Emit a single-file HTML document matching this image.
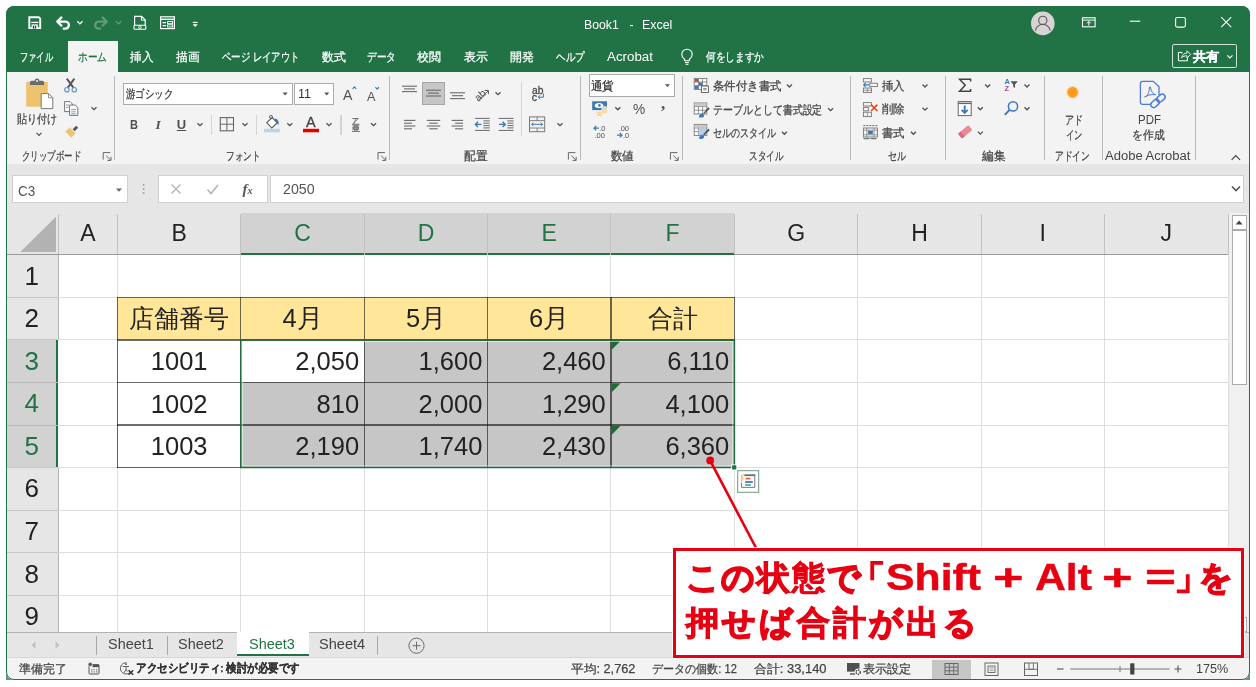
<!DOCTYPE html>
<html lang="ja">
<head>
<meta charset="utf-8">
<title>Book1 - Excel</title>
<style>
*{box-sizing:border-box;margin:0;padding:0}
html,body{width:1256px;height:687px;background:#fff;overflow:hidden}
body{font-family:"Liberation Sans",sans-serif;position:relative;color:#444}
#app{will-change:transform;position:absolute;left:0;top:0;width:1256px;height:687px;clip-path:inset(6px 6px 7.4px 6px round 8px 8px 0 0)}
#frame{position:absolute;left:6px;top:6px;width:1244px;height:673.6px;border:1px solid #217346;border-radius:8px;pointer-events:none}
.abs{position:absolute}
.t{position:absolute;white-space:nowrap;line-height:1;transform-origin:0 50%}
/* big regions */
#green{left:0;top:0;width:1256px;height:71.5px;background:#217346}
#hometab{left:68.4px;top:40.7px;width:49.6px;height:32px;background:#f3f3f3}
#ribbon{left:0;top:71.5px;width:1256px;height:92.3px;background:#f3f3f3}
#fbar{left:0;top:163.8px;width:1256px;height:49px;background:#e6e6e6}
#colhdr{left:0;top:212.8px;width:1256px;height:42px;background:#e6e6e6}
#grid{left:58px;top:254.8px;width:1170.5px;height:378px;background:#fff}
#rowhdr{left:0;top:254.8px;width:58px;height:378px;background:#e6e6e6}
#vscroll{left:1228.5px;top:212.8px;width:22px;height:420px;background:#f0f0f0}
#tabs{left:0;top:632px;width:1256px;height:26px;background:#e6e6e6}
#status{left:6px;top:657.8px;width:1244px;height:21.8px;background:#f3f3f3;border-radius:0 0 8px 8px}
#backdrop{left:0;top:660px;width:1256px;height:27px;background:#6d8c7b}
</style>
</head>
<body>
<div id="app">
<div id="backdrop" class="abs"></div>
<div id="green" class="abs"></div>
<div id="hometab" class="abs"></div>
<div id="ribbon" class="abs"></div>
<div id="fbar" class="abs"></div>
<div id="colhdr" class="abs"></div>
<div id="rowhdr" class="abs"></div>
<div id="grid" class="abs"></div>
<div id="vscroll" class="abs"></div>
<div id="tabs" class="abs"></div>
<div id="status" class="abs"></div>
<span id="t0" class="t" style="font-size:12.3px;color:#fff;top:18.6px;height:12.3px;left:584.3px;transform-origin:0 50%;transform:scaleX(0.9950);">Book1</span>
<span id="t1" class="t" style="font-size:12.3px;color:#fff;top:18.6px;height:12.3px;left:629.6px;transform-origin:0 50%;">-</span>
<span id="t2" class="t" style="font-size:12.3px;color:#fff;top:18.6px;height:12.3px;left:641.7px;transform-origin:0 50%;transform:scaleX(1.0074);">Excel</span>
<div class="abs" style="left:1172.2px;top:44.2px;width:64.8px;height:24.2px;border:1px solid #cfe3d6;border-radius:2px"></div>
<span id="t3" class="t" style="font-size:13px;color:#fff;top:50.1px;height:13px;font-weight:bold;left:1193.3px;transform-origin:0 50%;transform:scaleX(1.0192);-webkit-text-stroke:.25px;">共有</span>
<span id="t4" class="t" style="font-size:12px;color:#fff;top:50.6px;height:12px;left:19.7px;transform-origin:0 50%;transform:scaleX(0.6854);-webkit-text-stroke:.25px;">ファイル</span>
<span id="t5" class="t" style="font-size:12px;color:#217346;top:50.6px;height:12px;left:78.0px;transform-origin:0 50%;transform:scaleX(0.8056);-webkit-text-stroke:.25px;">ホーム</span>
<span id="t6" class="t" style="font-size:12px;color:#fff;top:50.6px;height:12px;left:129.6px;transform-origin:0 50%;transform:scaleX(0.9708);-webkit-text-stroke:.25px;">挿入</span>
<span id="t7" class="t" style="font-size:12px;color:#fff;top:50.6px;height:12px;left:175.8px;transform-origin:0 50%;transform:scaleX(0.9792);-webkit-text-stroke:.25px;">描画</span>
<span id="t8" class="t" style="font-size:12px;color:#fff;top:50.6px;height:12px;left:221.5px;transform-origin:0 50%;transform:scaleX(0.7801);-webkit-text-stroke:.25px;">ページ レイアウト</span>
<span id="t9" class="t" style="font-size:12px;color:#fff;top:50.6px;height:12px;left:321.8px;transform-origin:0 50%;transform:scaleX(0.9958);-webkit-text-stroke:.25px;">数式</span>
<span id="t10" class="t" style="font-size:12px;color:#fff;top:50.6px;height:12px;left:367.0px;transform-origin:0 50%;transform:scaleX(0.8000);-webkit-text-stroke:.25px;">データ</span>
<span id="t11" class="t" style="font-size:12px;color:#fff;top:50.6px;height:12px;left:417.3px;transform-origin:0 50%;transform:scaleX(0.9958);-webkit-text-stroke:.25px;">校閲</span>
<span id="t12" class="t" style="font-size:12px;color:#fff;top:50.6px;height:12px;left:463.9px;transform-origin:0 50%;transform:scaleX(0.9958);-webkit-text-stroke:.25px;">表示</span>
<span id="t13" class="t" style="font-size:12px;color:#fff;top:50.6px;height:12px;left:510.3px;transform-origin:0 50%;transform:scaleX(0.9958);-webkit-text-stroke:.25px;">開発</span>
<span id="t14" class="t" style="font-size:12px;color:#fff;top:50.6px;height:12px;left:556.4px;transform-origin:0 50%;transform:scaleX(0.7944);-webkit-text-stroke:.25px;">ヘルプ</span>
<span id="t15" class="t" style="font-size:12px;color:#fff;top:50.6px;height:12px;left:607.0px;transform-origin:0 50%;transform:scaleX(1.1098);">Acrobat</span>
<span id="t16" class="t" style="font-size:12px;color:#fff;top:50.6px;height:12px;left:706.0px;transform-origin:0 50%;transform:scaleX(0.8083);-webkit-text-stroke:.25px;">何をしますか</span>
<div class="abs" style="left:114.0px;top:76.0px;width:1.2px;height:84.0px;background:#b9b9b9"></div>
<div class="abs" style="left:389.2px;top:76.0px;width:1.2px;height:84.0px;background:#b9b9b9"></div>
<div class="abs" style="left:580.0px;top:76.0px;width:1.2px;height:84.0px;background:#b9b9b9"></div>
<div class="abs" style="left:681.8px;top:76.0px;width:1.2px;height:84.0px;background:#b9b9b9"></div>
<div class="abs" style="left:850.1px;top:76.0px;width:1.2px;height:84.0px;background:#b9b9b9"></div>
<div class="abs" style="left:944.7px;top:76.0px;width:1.2px;height:84.0px;background:#b9b9b9"></div>
<div class="abs" style="left:1044.0px;top:76.0px;width:1.2px;height:84.0px;background:#b9b9b9"></div>
<div class="abs" style="left:1101.6px;top:76.0px;width:1.2px;height:84.0px;background:#b9b9b9"></div>
<div class="abs" style="left:1195.2px;top:76.0px;width:1.2px;height:84.0px;background:#b9b9b9"></div>
<span id="t17" class="t" style="font-size:12px;color:#444;top:149.8px;height:12px;left:22.0px;transform-origin:0 50%;transform:scaleX(0.7024);-webkit-text-stroke:.25px;">クリップボード</span>
<span id="t18" class="t" style="font-size:12px;color:#444;top:149.8px;height:12px;left:225.8px;transform-origin:0 50%;transform:scaleX(0.7167);-webkit-text-stroke:.25px;">フォント</span>
<span id="t19" class="t" style="font-size:12px;color:#444;top:149.8px;height:12px;left:464.0px;transform-origin:0 50%;transform:scaleX(0.9750);-webkit-text-stroke:.25px;">配置</span>
<span id="t20" class="t" style="font-size:12px;color:#444;top:149.8px;height:12px;left:611.0px;transform-origin:0 50%;transform:scaleX(0.9583);-webkit-text-stroke:.25px;">数値</span>
<span id="t21" class="t" style="font-size:12px;color:#444;top:149.8px;height:12px;left:748.7px;transform-origin:0 50%;transform:scaleX(0.7146);-webkit-text-stroke:.25px;">スタイル</span>
<span id="t22" class="t" style="font-size:12px;color:#444;top:149.8px;height:12px;left:888.0px;transform-origin:0 50%;transform:scaleX(0.7500);-webkit-text-stroke:.25px;">セル</span>
<span id="t23" class="t" style="font-size:12px;color:#444;top:149.8px;height:12px;left:982.2px;transform-origin:0 50%;transform:scaleX(0.9708);-webkit-text-stroke:.25px;">編集</span>
<span id="t24" class="t" style="font-size:12px;color:#444;top:149.8px;height:12px;left:1054.6px;transform-origin:0 50%;transform:scaleX(0.7271);-webkit-text-stroke:.25px;">アドイン</span>
<span id="t25" class="t" style="font-size:12px;color:#444;top:149.8px;height:12px;left:1105.4px;transform-origin:0 50%;transform:scaleX(1.0847);">Adobe Acrobat</span>
<span id="t26" class="t" style="font-size:12px;color:#444;top:113.3px;height:12px;left:17.0px;transform-origin:0 50%;transform:scaleX(0.8396);-webkit-text-stroke:.25px;">貼り付け</span>
<div class="abs" style="left:123.0px;top:82.5px;width:169.8px;height:22.6px;background:#fff;border:1px solid #ababab"></div>
<span id="t27" class="t" style="font-size:12px;color:#333;top:88.0px;height:12px;left:125.6px;transform-origin:0 50%;transform:scaleX(0.7833);-webkit-text-stroke:.25px;">游ゴシック</span>
<div class="abs" style="left:294.2px;top:82.5px;width:39.6px;height:22.6px;background:#fff;border:1px solid #ababab"></div>
<span id="t28" class="t" style="font-size:12.5px;color:#333;top:88.0px;height:12.5px;left:297.6px;transform-origin:0 50%;transform:scaleX(1.0012);">11</span>
<span id="t29" class="t" style="font-size:14.5px;color:#505050;top:88.2px;height:14.5px;left:343.2px;transform-origin:0 50%;transform:scaleX(0.9719);">A</span>
<span id="t30" class="t" style="font-size:13px;color:#505050;top:89.5px;height:13px;left:366.6px;transform-origin:0 50%;transform:scaleX(0.9686);">A</span>
<span id="t31" class="t" style="font-size:13px;color:#505050;top:118.1px;height:13px;font-weight:bold;left:129.6px;transform-origin:0 50%;transform:scaleX(0.8519);">B</span>
<span id="t32" class="t" style="font-size:13.5px;color:#505050;top:117.8px;height:13.5px;font-weight:bold;font-family:&quot;Liberation Serif&quot;,serif;left:155.4px;transform-origin:0 50%;"><i>I</i></span>
<span id="t33" class="t" style="font-size:13px;color:#505050;top:117.9px;height:13px;font-weight:bold;left:176.8px;transform-origin:0 50%;"><u>U</u></span>
<div class="abs" style="left:211.3px;top:114.5px;width:1.2px;height:20.0px;background:#d4d4d4"></div>
<div class="abs" style="left:256.2px;top:114.5px;width:1.2px;height:20.0px;background:#d4d4d4"></div>
<span id="t34" class="t" style="font-size:14.4px;color:#444;top:115.2px;height:14.4px;left:306.1px;transform-origin:0 50%;-webkit-text-stroke:.35px #444;">A</span>
<div class="abs" style="left:340.4px;top:114.5px;width:1.2px;height:20.0px;background:#d4d4d4"></div>
<span id="t35" class="t" style="font-size:7px;color:#505050;top:116.8px;height:7px;left:352.2px;transform-origin:0 50%;-webkit-text-stroke:.25px;">ア</span>
<span id="t36" class="t" style="font-size:7.5px;color:#505050;top:124.8px;height:7.5px;left:352.0px;transform-origin:0 50%;-webkit-text-stroke:.25px;">亜</span>
<div class="abs" style="left:422.0px;top:82.0px;width:23.2px;height:23.4px;background:#c6c6c6;border:1px solid #a6a6a6"></div>
<div class="abs" style="left:521.2px;top:82.0px;width:1.2px;height:53.5px;background:#d4d4d4"></div>
<span id="t37" class="t" style="font-size:10.5px;color:#505050;top:84.8px;height:10.5px;left:531.6px;transform-origin:0 50%;transform:scaleX(0.9754);-webkit-text-stroke:.35px #505050;">ab</span>
<span id="t38" class="t" style="font-size:10.5px;color:#505050;top:92.0px;height:10.5px;left:531.8px;transform-origin:0 50%;-webkit-text-stroke:.35px #505050;">c</span>
<div class="abs" style="left:589.0px;top:74.3px;width:85.5px;height:22.6px;background:#fff;border:1px solid #ababab"></div>
<span id="t39" class="t" style="font-size:12px;color:#333;top:79.8px;height:12px;left:591.2px;transform-origin:0 50%;transform:scaleX(0.9583);-webkit-text-stroke:.25px;">通貨</span>
<span id="t40" class="t" style="font-size:15px;color:#505050;top:100.5px;height:15px;left:633.0px;transform-origin:0 50%;transform:scaleX(0.9143);">%</span>
<span id="t41" class="t" style="font-size:17px;color:#505050;top:94.7px;height:17px;font-weight:bold;font-family:&quot;Liberation Serif&quot;,serif;left:661.0px;transform-origin:0 50%;">,</span>
<span id="t42" class="t" style="font-size:7.5px;color:#505050;top:124.7px;height:7.5px;left:599.2px;transform-origin:0 50%;">.0</span>
<span id="t43" class="t" style="font-size:7.5px;color:#505050;top:131.7px;height:7.5px;left:594.4px;transform-origin:0 50%;">.00</span>
<span id="t44" class="t" style="font-size:7.5px;color:#505050;top:124.7px;height:7.5px;left:618.6px;transform-origin:0 50%;">.00</span>
<span id="t45" class="t" style="font-size:7.5px;color:#505050;top:131.7px;height:7.5px;left:623.0px;transform-origin:0 50%;">.0</span>
<span id="t46" class="t" style="font-size:12px;color:#444;top:80.0px;height:12px;left:713.0px;transform-origin:0 50%;transform:scaleX(0.9542);-webkit-text-stroke:.25px;">条件付き書式</span>
<span id="t47" class="t" style="font-size:12px;color:#444;top:103.6px;height:12px;left:713.0px;transform-origin:0 50%;transform:scaleX(0.8288);-webkit-text-stroke:.25px;">テーブルとして書式設定</span>
<span id="t48" class="t" style="font-size:12px;color:#444;top:127.2px;height:12px;left:713.0px;transform-origin:0 50%;transform:scaleX(0.7548);-webkit-text-stroke:.25px;">セルのスタイル</span>
<span id="t49" class="t" style="font-size:12px;color:#444;top:79.7px;height:12px;left:882.2px;transform-origin:0 50%;transform:scaleX(0.9500);-webkit-text-stroke:.25px;">挿入</span>
<span id="t50" class="t" style="font-size:12px;color:#444;top:103.3px;height:12px;left:882.2px;transform-origin:0 50%;transform:scaleX(0.9500);-webkit-text-stroke:.25px;">削除</span>
<span id="t51" class="t" style="font-size:12px;color:#444;top:127.2px;height:12px;left:882.2px;transform-origin:0 50%;transform:scaleX(0.9500);-webkit-text-stroke:.25px;">書式</span>
<span id="t52" class="t" style="font-size:7.5px;color:#3c76b8;top:78.2px;height:7.5px;font-weight:bold;left:1004.4px;transform-origin:0 50%;">A</span>
<span id="t53" class="t" style="font-size:7.5px;color:#9b4f96;top:85.0px;height:7.5px;font-weight:bold;left:1004.6px;transform-origin:0 50%;">Z</span>
<span id="t54" class="t" style="font-size:12px;color:#444;top:114.2px;height:12px;left:1065.0px;transform-origin:0 50%;transform:scaleX(0.7500);-webkit-text-stroke:.25px;">アド</span>
<span id="t55" class="t" style="font-size:12px;color:#444;top:128.6px;height:12px;left:1065.6px;transform-origin:0 50%;transform:scaleX(0.6917);-webkit-text-stroke:.25px;">イン</span>
<span id="t56" class="t" style="font-size:12.3px;color:#444;top:114.0px;height:12.3px;left:1137.6px;transform-origin:0 50%;transform:scaleX(0.9305);">PDF</span>
<span id="t57" class="t" style="font-size:12px;color:#444;top:128.6px;height:12px;left:1132.3px;transform-origin:0 50%;transform:scaleX(0.9000);-webkit-text-stroke:.25px;">を作成</span>
<div class="abs" style="left:11.6px;top:175.4px;width:116.6px;height:28.0px;background:#fff;border:1px solid #d0d0d0"></div>
<span id="t58" class="t" style="font-size:15px;color:#555;top:183.0px;height:15px;left:17.5px;transform-origin:0 50%;transform:scaleX(0.9016);">C3</span>
<div class="abs" style="left:158.4px;top:175.4px;width:109.2px;height:28.0px;background:#fff;border:1px solid #d0d0d0"></div>
<span id="t59" class="t" style="font-size:15px;color:#555;top:182.0px;height:15px;font-weight:bold;font-family:&quot;Liberation Serif&quot;,serif;left:242.5px;transform-origin:0 50%;"><i>f</i><span style="font-size:10px"><i>x</i></span></span>
<div class="abs" style="left:270.2px;top:175.4px;width:974.0px;height:28.0px;background:#fff;border:1px solid #d0d0d0"></div>
<span id="t60" class="t" style="font-size:15px;color:#555;top:181.0px;height:15px;left:282.8px;transform-origin:0 50%;transform:scaleX(0.9468);">2050</span>
<div class="abs" style="left:240.8px;top:212.8px;width:493.6px;height:42.0px;background:#d2d2d2;border-bottom:2px solid #217346"></div>
<span id="t61" class="t" style="font-size:23px;color:#222;top:222.1px;height:23px;left:88.0px;transform-origin:50% 50%;transform:translateX(-50%) scaleX(1.0000);">A</span>
<span id="t62" class="t" style="font-size:23px;color:#222;top:222.1px;height:23px;left:179.2px;transform-origin:50% 50%;transform:translateX(-50%) scaleX(1.0000);">B</span>
<span id="t63" class="t" style="font-size:23px;color:#217346;top:222.1px;height:23px;left:302.6px;transform-origin:50% 50%;transform:translateX(-50%) scaleX(1.0000);">C</span>
<span id="t64" class="t" style="font-size:23px;color:#217346;top:222.1px;height:23px;left:426.0px;transform-origin:50% 50%;transform:translateX(-50%) scaleX(1.0000);">D</span>
<span id="t65" class="t" style="font-size:23px;color:#217346;top:222.1px;height:23px;left:549.2px;transform-origin:50% 50%;transform:translateX(-50%) scaleX(1.0000);">E</span>
<span id="t66" class="t" style="font-size:23px;color:#217346;top:222.1px;height:23px;left:672.6px;transform-origin:50% 50%;transform:translateX(-50%) scaleX(1.0000);">F</span>
<span id="t67" class="t" style="font-size:23px;color:#222;top:222.1px;height:23px;left:796.1px;transform-origin:50% 50%;transform:translateX(-50%) scaleX(1.0000);">G</span>
<span id="t68" class="t" style="font-size:23px;color:#222;top:222.1px;height:23px;left:919.5px;transform-origin:50% 50%;transform:translateX(-50%) scaleX(1.0000);">H</span>
<span id="t69" class="t" style="font-size:23px;color:#222;top:222.1px;height:23px;left:1042.8px;transform-origin:50% 50%;transform:translateX(-50%) scaleX(1.0000);">I</span>
<span id="t70" class="t" style="font-size:23px;color:#222;top:222.1px;height:23px;left:1166.2px;transform-origin:50% 50%;transform:translateX(-50%) scaleX(1.0000);">J</span>
<div class="abs" style="left:57.7px;top:213.8px;width:1.0px;height:41.0px;background:#c2c2c2"></div>
<div class="abs" style="left:117.2px;top:213.8px;width:1.0px;height:41.0px;background:#c2c2c2"></div>
<div class="abs" style="left:240.3px;top:213.8px;width:1.0px;height:41.0px;background:#c2c2c2"></div>
<div class="abs" style="left:363.8px;top:213.8px;width:1.0px;height:41.0px;background:#c2c2c2"></div>
<div class="abs" style="left:487.1px;top:213.8px;width:1.0px;height:41.0px;background:#c2c2c2"></div>
<div class="abs" style="left:610.4px;top:213.8px;width:1.0px;height:41.0px;background:#c2c2c2"></div>
<div class="abs" style="left:733.9px;top:213.8px;width:1.0px;height:41.0px;background:#c2c2c2"></div>
<div class="abs" style="left:857.3px;top:213.8px;width:1.0px;height:41.0px;background:#c2c2c2"></div>
<div class="abs" style="left:980.6px;top:213.8px;width:1.0px;height:41.0px;background:#c2c2c2"></div>
<div class="abs" style="left:1104.0px;top:213.8px;width:1.0px;height:41.0px;background:#c2c2c2"></div>
<div class="abs" style="left:1227.5px;top:213.8px;width:1.0px;height:41.0px;background:#c2c2c2"></div>
<div class="abs" style="left:6.0px;top:253.8px;width:234.8px;height:1.0px;background:#9b9b9b"></div>
<div class="abs" style="left:734.4px;top:253.8px;width:493.6px;height:1.0px;background:#9b9b9b"></div>
<div class="abs" style="left:6.0px;top:339.9px;width:52.2px;height:127.6px;background:#d2d2d2;border-right:2px solid #217346"></div>
<span id="t71" class="t" style="font-size:26px;color:#222;top:262.8px;height:26px;left:31.8px;transform-origin:50% 50%;transform:translateX(-50%) scaleX(1.0000);">1</span>
<span id="t72" class="t" style="font-size:26px;color:#222;top:305.3px;height:26px;left:31.8px;transform-origin:50% 50%;transform:translateX(-50%) scaleX(1.0000);">2</span>
<span id="t73" class="t" style="font-size:26px;color:#217346;top:347.9px;height:26px;left:31.8px;transform-origin:50% 50%;transform:translateX(-50%) scaleX(1.0000);">3</span>
<span id="t74" class="t" style="font-size:26px;color:#217346;top:390.4px;height:26px;left:31.8px;transform-origin:50% 50%;transform:translateX(-50%) scaleX(1.0000);">4</span>
<span id="t75" class="t" style="font-size:26px;color:#217346;top:432.9px;height:26px;left:31.8px;transform-origin:50% 50%;transform:translateX(-50%) scaleX(1.0000);">5</span>
<span id="t76" class="t" style="font-size:26px;color:#222;top:475.4px;height:26px;left:31.8px;transform-origin:50% 50%;transform:translateX(-50%) scaleX(1.0000);">6</span>
<span id="t77" class="t" style="font-size:26px;color:#222;top:518.0px;height:26px;left:31.8px;transform-origin:50% 50%;transform:translateX(-50%) scaleX(1.0000);">7</span>
<span id="t78" class="t" style="font-size:26px;color:#222;top:560.5px;height:26px;left:31.8px;transform-origin:50% 50%;transform:translateX(-50%) scaleX(1.0000);">8</span>
<span id="t79" class="t" style="font-size:26px;color:#222;top:603.0px;height:26px;left:31.8px;transform-origin:50% 50%;transform:translateX(-50%) scaleX(1.0000);">9</span>
<div class="abs" style="left:6.0px;top:296.9px;width:52.2px;height:1.0px;background:#c6c6c6"></div>
<div class="abs" style="left:6.0px;top:339.4px;width:52.2px;height:1.0px;background:#c6c6c6"></div>
<div class="abs" style="left:6.0px;top:382.0px;width:52.2px;height:1.0px;background:#b9b9b9"></div>
<div class="abs" style="left:6.0px;top:424.5px;width:52.2px;height:1.0px;background:#b9b9b9"></div>
<div class="abs" style="left:6.0px;top:467.0px;width:52.2px;height:1.0px;background:#c6c6c6"></div>
<div class="abs" style="left:6.0px;top:509.5px;width:52.2px;height:1.0px;background:#c6c6c6"></div>
<div class="abs" style="left:6.0px;top:552.0px;width:52.2px;height:1.0px;background:#c6c6c6"></div>
<div class="abs" style="left:6.0px;top:594.5px;width:52.2px;height:1.0px;background:#c6c6c6"></div>
<div class="abs" style="left:57.7px;top:254.8px;width:1.0px;height:85.1px;background:#b4b4b4"></div>
<div class="abs" style="left:57.7px;top:467.5px;width:1.0px;height:164.5px;background:#b4b4b4"></div>
<div class="abs" style="left:117.2px;top:254.8px;width:1.0px;height:377.2px;background:#dedede"></div>
<div class="abs" style="left:240.3px;top:254.8px;width:1.0px;height:377.2px;background:#dedede"></div>
<div class="abs" style="left:363.8px;top:254.8px;width:1.0px;height:377.2px;background:#dedede"></div>
<div class="abs" style="left:487.1px;top:254.8px;width:1.0px;height:377.2px;background:#dedede"></div>
<div class="abs" style="left:610.4px;top:254.8px;width:1.0px;height:377.2px;background:#dedede"></div>
<div class="abs" style="left:733.9px;top:254.8px;width:1.0px;height:377.2px;background:#dedede"></div>
<div class="abs" style="left:857.3px;top:254.8px;width:1.0px;height:377.2px;background:#dedede"></div>
<div class="abs" style="left:980.6px;top:254.8px;width:1.0px;height:377.2px;background:#dedede"></div>
<div class="abs" style="left:1104.0px;top:254.8px;width:1.0px;height:377.2px;background:#dedede"></div>
<div class="abs" style="left:1227.5px;top:254.8px;width:1.0px;height:377.2px;background:#dedede"></div>
<div class="abs" style="left:58.2px;top:296.9px;width:1169.8px;height:1.0px;background:#dedede"></div>
<div class="abs" style="left:58.2px;top:339.4px;width:1169.8px;height:1.0px;background:#dedede"></div>
<div class="abs" style="left:58.2px;top:382.0px;width:1169.8px;height:1.0px;background:#dedede"></div>
<div class="abs" style="left:58.2px;top:424.5px;width:1169.8px;height:1.0px;background:#dedede"></div>
<div class="abs" style="left:58.2px;top:467.0px;width:1169.8px;height:1.0px;background:#dedede"></div>
<div class="abs" style="left:58.2px;top:509.5px;width:1169.8px;height:1.0px;background:#dedede"></div>
<div class="abs" style="left:58.2px;top:552.0px;width:1169.8px;height:1.0px;background:#dedede"></div>
<div class="abs" style="left:58.2px;top:594.5px;width:1169.8px;height:1.0px;background:#dedede"></div>
<div class="abs" style="left:117.7px;top:297.4px;width:616.7px;height:42.5px;background:#ffe699"></div>
<div class="abs" style="left:240.8px;top:339.9px;width:493.6px;height:127.6px;background:#c6c6c6"></div>
<div class="abs" style="left:240.8px;top:339.9px;width:123.5px;height:42.6px;background:#fff"></div>
<div class="abs" style="left:117.7px;top:339.9px;width:123.1px;height:127.6px;background:#fff"></div>
<div class="abs" style="left:117.0px;top:296.7px;width:618.1px;height:1.4px;background:rgba(20,20,20,.62)"></div>
<div class="abs" style="left:117.0px;top:339.2px;width:618.1px;height:1.4px;background:rgba(20,20,20,.62)"></div>
<div class="abs" style="left:117.0px;top:381.8px;width:618.1px;height:1.4px;background:rgba(20,20,20,.62)"></div>
<div class="abs" style="left:117.0px;top:424.3px;width:618.1px;height:1.4px;background:rgba(20,20,20,.62)"></div>
<div class="abs" style="left:117.0px;top:466.8px;width:618.1px;height:1.4px;background:rgba(20,20,20,.62)"></div>
<div class="abs" style="left:117.0px;top:296.7px;width:1.4px;height:171.5px;background:rgba(20,20,20,.62)"></div>
<div class="abs" style="left:240.1px;top:296.7px;width:1.4px;height:171.5px;background:rgba(20,20,20,.62)"></div>
<div class="abs" style="left:363.6px;top:296.7px;width:1.4px;height:171.5px;background:rgba(20,20,20,.62)"></div>
<div class="abs" style="left:486.9px;top:296.7px;width:1.4px;height:171.5px;background:rgba(20,20,20,.62)"></div>
<div class="abs" style="left:610.2px;top:296.7px;width:1.4px;height:171.5px;background:rgba(20,20,20,.62)"></div>
<div class="abs" style="left:733.7px;top:296.7px;width:1.4px;height:171.5px;background:rgba(20,20,20,.62)"></div>
<span id="t80" class="t" style="font-size:24.6px;color:#222;top:306.8px;height:24.6px;left:179.2px;transform-origin:50% 50%;transform:translateX(-50%) scaleX(1.0000);">店舗番号</span>
<span id="t81" class="t" style="font-size:25.5px;color:#222;top:306.4px;height:25.5px;left:302.6px;transform-origin:50% 50%;transform:translateX(-50%) scaleX(1.0000);">4月</span>
<span id="t82" class="t" style="font-size:25.5px;color:#222;top:306.4px;height:25.5px;left:426.0px;transform-origin:50% 50%;transform:translateX(-50%) scaleX(1.0000);">5月</span>
<span id="t83" class="t" style="font-size:25.5px;color:#222;top:306.4px;height:25.5px;left:549.2px;transform-origin:50% 50%;transform:translateX(-50%) scaleX(1.0000);">6月</span>
<span id="t84" class="t" style="font-size:24.6px;color:#222;top:306.8px;height:24.6px;left:672.6px;transform-origin:50% 50%;transform:translateX(-50%) scaleX(1.0000);">合計</span>
<span id="t85" class="t" style="font-size:25.5px;color:#222;top:349.1px;height:25.5px;left:179.2px;transform-origin:50% 50%;transform:translateX(-50%) scaleX(1.0000);">1001</span>
<span id="t86" class="t" style="font-size:25.5px;color:#222;top:391.6px;height:25.5px;left:179.2px;transform-origin:50% 50%;transform:translateX(-50%) scaleX(1.0000);">1002</span>
<span id="t87" class="t" style="font-size:25.5px;color:#222;top:434.1px;height:25.5px;left:179.2px;transform-origin:50% 50%;transform:translateX(-50%) scaleX(1.0000);">1003</span>
<span id="t88" class="t" style="font-size:25.5px;color:#222;top:349.1px;height:25.5px;left:359.1px;transform-origin:100% 50%;transform:translateX(-100%) scaleX(1.0000);">2,050</span>
<span id="t89" class="t" style="font-size:25.5px;color:#222;top:349.1px;height:25.5px;left:482.4px;transform-origin:100% 50%;transform:translateX(-100%) scaleX(1.0000);">1,600</span>
<span id="t90" class="t" style="font-size:25.5px;color:#222;top:349.1px;height:25.5px;left:605.7px;transform-origin:100% 50%;transform:translateX(-100%) scaleX(1.0000);">2,460</span>
<span id="t91" class="t" style="font-size:25.5px;color:#222;top:349.1px;height:25.5px;left:729.2px;transform-origin:100% 50%;transform:translateX(-100%) scaleX(1.0000);">6,110</span>
<span id="t92" class="t" style="font-size:25.5px;color:#222;top:391.6px;height:25.5px;left:359.1px;transform-origin:100% 50%;transform:translateX(-100%) scaleX(1.0000);">810</span>
<span id="t93" class="t" style="font-size:25.5px;color:#222;top:391.6px;height:25.5px;left:482.4px;transform-origin:100% 50%;transform:translateX(-100%) scaleX(1.0000);">2,000</span>
<span id="t94" class="t" style="font-size:25.5px;color:#222;top:391.6px;height:25.5px;left:605.7px;transform-origin:100% 50%;transform:translateX(-100%) scaleX(1.0000);">1,290</span>
<span id="t95" class="t" style="font-size:25.5px;color:#222;top:391.6px;height:25.5px;left:729.2px;transform-origin:100% 50%;transform:translateX(-100%) scaleX(1.0000);">4,100</span>
<span id="t96" class="t" style="font-size:25.5px;color:#222;top:434.1px;height:25.5px;left:359.1px;transform-origin:100% 50%;transform:translateX(-100%) scaleX(1.0000);">2,190</span>
<span id="t97" class="t" style="font-size:25.5px;color:#222;top:434.1px;height:25.5px;left:482.4px;transform-origin:100% 50%;transform:translateX(-100%) scaleX(1.0000);">1,740</span>
<span id="t98" class="t" style="font-size:25.5px;color:#222;top:434.1px;height:25.5px;left:605.7px;transform-origin:100% 50%;transform:translateX(-100%) scaleX(1.0000);">2,430</span>
<span id="t99" class="t" style="font-size:25.5px;color:#222;top:434.1px;height:25.5px;left:729.2px;transform-origin:100% 50%;transform:translateX(-100%) scaleX(1.0000);">6,360</span>
<div class="abs" style="left:1231.6px;top:215.0px;width:15.0px;height:15.0px;background:#fff;border:1px solid #ababab"></div>
<div class="abs" style="left:1231.6px;top:229.6px;width:15.0px;height:155.5px;background:#fff;border:1px solid #ababab"></div>
<div class="abs" style="left:6.0px;top:631.6px;width:1244.0px;height:1.0px;background:#b2b2b2"></div>
<div class="abs" style="left:6.0px;top:657.2px;width:1244.0px;height:1.0px;background:#d6d6d6"></div>
<div class="abs" style="left:1231.6px;top:617.0px;width:15.0px;height:15.0px;background:#fff;border:1px solid #ababab"></div>
<div class="abs" style="left:95.8px;top:635.5px;width:1.0px;height:19.0px;background:#a8a8a8"></div>
<div class="abs" style="left:166.9px;top:635.5px;width:1.0px;height:19.0px;background:#a8a8a8"></div>
<div class="abs" style="left:376.8px;top:635.5px;width:1.0px;height:19.0px;background:#a8a8a8"></div>
<div class="abs" style="left:237.4px;top:632.0px;width:71.4px;height:24.3px;background:#fff;border-bottom:2px solid #217346"></div>
<span id="t100" class="t" style="font-size:15.5px;color:#444;top:635.9px;height:15.5px;left:108.0px;transform-origin:0 50%;transform:scaleX(0.9320);">Sheet1</span>
<span id="t101" class="t" style="font-size:15.5px;color:#444;top:635.9px;height:15.5px;left:178.4px;transform-origin:0 50%;transform:scaleX(0.9320);">Sheet2</span>
<span id="t102" class="t" style="font-size:15.5px;color:#217346;top:635.9px;height:15.5px;left:249.0px;transform-origin:0 50%;transform:scaleX(0.9341);">Sheet3</span>
<span id="t103" class="t" style="font-size:15.5px;color:#444;top:635.9px;height:15.5px;left:319.4px;transform-origin:0 50%;transform:scaleX(0.9402);">Sheet4</span>
<span id="t104" class="t" style="font-size:12px;color:#444;top:662.8px;height:12px;left:19.0px;transform-origin:0 50%;transform:scaleX(0.9938);-webkit-text-stroke:.25px;">準備完了</span>
<span id="t105" class="t" style="font-size:11.5px;color:#333;top:663.0px;height:11.5px;font-weight:bold;left:136.3px;transform-origin:0 50%;transform:scaleX(0.8769);-webkit-text-stroke:.25px;">アクセシビリティ: 検討が必要です</span>
<span id="t106" class="t" style="font-size:12px;color:#444;top:663.3px;height:12px;left:571.0px;transform-origin:0 50%;transform:scaleX(1.0609);-webkit-text-stroke:.25px;">平均: 2,762</span>
<span id="t107" class="t" style="font-size:12px;color:#444;top:663.3px;height:12px;left:652.4px;transform-origin:0 50%;transform:scaleX(0.9216);-webkit-text-stroke:.25px;">データの個数: 12</span>
<span id="t108" class="t" style="font-size:12px;color:#444;top:663.3px;height:12px;left:753.5px;transform-origin:0 50%;transform:scaleX(1.0761);-webkit-text-stroke:.25px;">合計: 33,140</span>
<span id="t109" class="t" style="font-size:12px;color:#444;top:663.0px;height:12px;left:862.5px;transform-origin:0 50%;transform:scaleX(1.0125);-webkit-text-stroke:.25px;">表示設定</span>
<div class="abs" style="left:932.0px;top:659.8px;width:38.8px;height:19.2px;background:#c6c6c6"></div>
<span id="t110" class="t" style="font-size:12px;color:#444;top:663.3px;height:12px;left:1196.0px;transform-origin:0 50%;transform:scaleX(1.0488);">175%</span>
<svg class="abs" style="left:0;top:0" width="1256" height="687" viewBox="0 0 1256 687" fill="none"><path d="M29.300 17.200h9.400l1.500 1.500v9.400H29.300z" stroke="#fff" stroke-width="1.900"/><path d="M31.200 22.400h7.200" stroke="#fff" stroke-width="1.300"/><rect x="31.600" y="24.400" width="6.200" height="4.200" fill="#fff"/><rect x="32.800" y="25.700" width="3.400" height="2.900" fill="#1a4d30"/><rect x="34.200" y="25.700" width=".7" height="2.900" fill="#fff"/>
<path d="M62 16.9l-4.7 4.7 4.7 4.7M58 21.6h7.4a3.5 3.5 0 0 1 0 7h-2.6" stroke="#fff" stroke-width="2.3" stroke-linejoin="round"/>
<path d="M77.3 21.3l2.6 2.6 2.6-2.6" stroke="#fff" stroke-width="1.3"/>
<path d="M102 16.9l4.700 4.700-4.700 4.700M106 21.600h-7.400a3.500 3.500 0 0 0 0 7h2.600" stroke="#5d9b78" stroke-width="2.3" stroke-linejoin="round"/>
<path d="M116 21.3l2.6 2.6 2.6-2.6" stroke="#5d9b78" stroke-width="1.3"/>
<path d="M134.6 26V16.4h7l3.6 3.6V26" stroke="#fff" stroke-width="1.2"/><path d="M141.4 16.4v3.8h3.8" stroke="#fff" stroke-width="1"/><rect x="134" y="25.2" width="11.8" height="4" rx=".8" stroke="#fff" stroke-width="1.1"/><circle cx="139.9" cy="27.2" r="1.3" stroke="#fff" stroke-width=".9"/>
<rect x="160.6" y="16.8" width="13.8" height="11.8" stroke="#fff" stroke-width="1.2"/><path d="M160.6 19.3h13.8" stroke="#fff" stroke-width="1.4"/><path d="M162.6 22.6h3.4M162.6 25.6h3.4" stroke="#fff" stroke-width="1.1"/><rect x="167.6" y="21.5" width="5" height="2.2" stroke="#fff" stroke-width=".9"/><rect x="167.6" y="24.8" width="5" height="2.2" stroke="#fff" stroke-width=".9"/>
<path d="M192.8 22.4h4.8" stroke="#fff" stroke-width="1.1"/><path d="M192.6 24.3h5.2l-2.6 2.8z" fill="#fff"/>
<circle cx="1042.8" cy="23.4" r="11.8" fill="#d8d4d6"/><circle cx="1042.8" cy="20.4" r="4.1" stroke="#5b5558" stroke-width="1.1"/><path d="M1035.4 30.6a7.5 7.5 0 0 1 14.8 0" stroke="#5b5558" stroke-width="1.1"/>
<rect x="1082.5" y="17.8" width="12.6" height="9" stroke="#fff" stroke-width="1.1"/><path d="M1082.5 20.1h12.6" stroke="#fff" stroke-width="1"/><path d="M1088.8 25.6v-4M1086.8 23.4l2-2 2 2" stroke="#fff" stroke-width="1"/>
<path d="M1129.8 21.2h10.4" stroke="#fff" stroke-width="1.1"/>
<rect x="1175.6" y="17.5" width="9.8" height="9.6" rx="1.6" stroke="#fff" stroke-width="1.1"/>
<path d="M1221.2 17.2l10 10M1231.2 17.2l-10 10" stroke="#fff" stroke-width="1.1"/>
<path d="M1182 53.6v-1.2h-3.6v8.4h9v-3" stroke="#fff" stroke-width="1"/><path d="M1181.6 57.8c.6-3 2.6-4.6 5.4-4.8v-2.2l3.6 3.6-3.6 3.6v-2.2c-2.4 0-4 .6-5.4 2z" stroke="#fff" stroke-width=".9"/>
<path d="M1227.3 55.4l2.6 2.6 2.6-2.6" stroke="#fff" stroke-width="1.2"/>
<path d="M684.6 59.2c-2.2-1.6-2.8-3.4-2.8-4.8a5.2 5.2 0 0 1 10.4 0c0 1.4-.6 3.2-2.8 4.8v1.6h-4.8z" stroke="#fff" stroke-width="1.1"/><path d="M685 62.6h4M685.6 64.3h2.8" stroke="#fff" stroke-width="1"/>
<path d="M110.2 152.6H103.2v7" stroke="#666" stroke-width="1"/><path d="M106.2 155.6l4.6 4.6M111.0 156.79999999999998v3.6h-3.6" stroke="#666" stroke-width="1"/>
<path d="M385 152.6H378v7" stroke="#666" stroke-width="1"/><path d="M381 155.6l4.6 4.6M385.8 156.79999999999998v3.6h-3.6" stroke="#666" stroke-width="1"/>
<path d="M575.4 152.6H568.4v7" stroke="#666" stroke-width="1"/><path d="M571.4 155.6l4.6 4.6M576.1999999999999 156.79999999999998v3.6h-3.6" stroke="#666" stroke-width="1"/>
<path d="M677.4 152.6H670.4v7" stroke="#666" stroke-width="1"/><path d="M673.4 155.6l4.6 4.6M678.1999999999999 156.79999999999998v3.6h-3.6" stroke="#666" stroke-width="1"/>
<path d="M1231.6 159.8l4.2-4.2 4.2 4.2" stroke="#444" stroke-width="1.2"/>
<rect x="26.2" y="81.8" width="21.6" height="25" rx="1.2" fill="#eec36f"/><path d="M30 84.900v-2.500a1.600 1.600 0 0 1 1.600-1.600h3a2.400 2.400 0 0 1 4.800 0h3a1.600 1.600 0 0 1 1.600 1.600v2.500z" fill="#6b6b6b"/><circle cx="37" cy="81" r="1" fill="#f3f3f3"/>
<path d="M41.2 93.6h7.6l4 4v11h-11.6z" fill="#fff" stroke="#7a7a7a" stroke-width="1"/><path d="M48.6 93.8v4h4" stroke="#7a7a7a" stroke-width=".9"/>
<path d="M36.5 132.9l2.5 2.5 2.5 -2.5" stroke="#505050" stroke-width="1.3"/>
<path d="M66.800 78.600l6.600 9M74.400 78.600l-6.600 9" stroke="#555" stroke-width="1.900"/><circle cx="66.900" cy="89.700" r="2.200" stroke="#6396d0" stroke-width="1.200"/><circle cx="74.300" cy="89.700" r="2.200" stroke="#6396d0" stroke-width="1.200"/>
<path d="M64.6 101.6h5.4l2.4 2.4v7.6h-7.8z" fill="#fff" stroke="#666" stroke-width=".9"/><path d="M69.6 105h5.6l2.6 2.6v7.8h-8.2z" fill="#fff" stroke="#666" stroke-width=".9"/><path d="M66 105h3M66 107.4h2.6M71.2 109.6h4.6M71.2 111.8h4.6M71.2 113.8h4.6" stroke="#4a86c6" stroke-width=".8"/>
<path d="M91.5 107.2l2.5 2.5 2.5 -2.5" stroke="#505050" stroke-width="1.3"/>
<path d="M72.6 129.2l3.6-3.4 2 2-3.6 3.4z" fill="#555"/><path d="M65.2 131.6l5.2-4.4 5.4 5.4-4.4 5.2z" fill="#eec36f"/><path d="M70 127.6l5.6 5.6" stroke="#f3f3f3" stroke-width=".8"/>
<path d="M282.6 92.6h5l-2.5 2.8z" fill="#555"/>
<path d="M324.2 92.6h5l-2.5 2.8z" fill="#555"/>
<path d="M352.6 88.8l1.8-1.9 1.8 1.9" stroke="#3c76b8" stroke-width="1.1" fill="none"/>
<path d="M375.4 87.2l1.8 1.9 1.8-1.9" stroke="#3c76b8" stroke-width="1.1" fill="none"/>
<path d="M197.5 123.2l2.5 2.5 2.5 -2.5" stroke="#505050" stroke-width="1.3"/>
<rect x="220.3" y="117.6" width="13.2" height="13.2" stroke="#666" stroke-width="1.1"/><path d="M226.9 117.6v13.2M220.3 124.2h13.2" stroke="#666" stroke-width="1"/>
<path d="M242.5 123.2l2.5 2.5 2.5 -2.5" stroke="#505050" stroke-width="1.3"/>
<path d="M275 118.200c3 .800 4.600 3.400 3.400 7.200-.800-2-1.800-3.400-3.800-4.400z" fill="#4a7fc0"/><path d="M266.800 122.600l5.400-5 5 5.400-5.400 5z" fill="#fff" stroke="#555" stroke-width="1.100"/><circle cx="271" cy="117" r="1.500" stroke="#555" stroke-width=".9"/><rect x="264" y="128.800" width="15.800" height="3.500" fill="#bcd4ea"/>
<path d="M287.3 123.2l2.5 2.5 2.5 -2.5" stroke="#505050" stroke-width="1.3"/>
<rect x="303" y="128.8" width="16" height="3.5" fill="#e80000"/>
<path d="M326.5 123.2l2.5 2.5 2.5 -2.5" stroke="#505050" stroke-width="1.3"/>
<path d="M352 124.2h7.4" stroke="#555" stroke-width=".8"/>
<path d="M371.0 123.2l2.5 2.5 2.5 -2.5" stroke="#505050" stroke-width="1.3"/>
<path d="M402.0 86.2h15.0" stroke="#6a6a6a" stroke-width="1.1"/>
<path d="M404.0 88.9h11.0" stroke="#6a6a6a" stroke-width="1.1"/>
<path d="M402.0 91.6h15.0" stroke="#6a6a6a" stroke-width="1.1"/>
<path d="M426.0 90.2h15.0" stroke="#6a6a6a" stroke-width="1.1"/>
<path d="M428.0 93.1h11.0" stroke="#6a6a6a" stroke-width="1.1"/>
<path d="M426.0 96.0h15.0" stroke="#6a6a6a" stroke-width="1.1"/>
<path d="M450.0 92.8h15.0" stroke="#6a6a6a" stroke-width="1.1"/>
<path d="M452.0 95.7h11.0" stroke="#6a6a6a" stroke-width="1.1"/>
<path d="M450.0 98.6h15.0" stroke="#6a6a6a" stroke-width="1.1"/>
<g transform="rotate(-42 481 94)"><text x="473.6" y="98" font-family="Liberation Sans,sans-serif" font-size="10.5" fill="#555">ab</text></g><path d="M478.4 100.4l9.8-9.6M484.6 90.4h3.8v3.8" stroke="#555" stroke-width="1"/>
<path d="M495.5 92.2l2.5 2.5 2.5 -2.5" stroke="#505050" stroke-width="1.3"/>
<path d="M543.4 93.6v3.6h-5.2M540.2 95.2l-2 2 2 2" stroke="#3c76b8" stroke-width="1"/>
<path d="M404.0 120.4h11.4" stroke="#6a6a6a" stroke-width="1.1"/>
<path d="M404.0 123.2h8.0" stroke="#6a6a6a" stroke-width="1.1"/>
<path d="M404.0 126.0h11.4" stroke="#6a6a6a" stroke-width="1.1"/>
<path d="M404.0 128.8h8.0" stroke="#6a6a6a" stroke-width="1.1"/>
<path d="M426.8 120.4h13.4" stroke="#6a6a6a" stroke-width="1.1"/>
<path d="M429.3 123.2h8.4" stroke="#6a6a6a" stroke-width="1.1"/>
<path d="M426.8 126.0h13.4" stroke="#6a6a6a" stroke-width="1.1"/>
<path d="M429.3 128.8h8.4" stroke="#6a6a6a" stroke-width="1.1"/>
<path d="M451.7 120.4h11.4" stroke="#6a6a6a" stroke-width="1.1"/>
<path d="M455.1 123.2h8.0" stroke="#6a6a6a" stroke-width="1.1"/>
<path d="M451.7 126.0h11.4" stroke="#6a6a6a" stroke-width="1.1"/>
<path d="M455.1 128.8h8.0" stroke="#6a6a6a" stroke-width="1.1"/>
<path d="M475 118.400h14.800M475 130.400h14.800M483.400 120.900h6.400M483.400 123.200h6.400M483.400 125.600h6.400M483.400 127.900h6.400" stroke="#6a6a6a" stroke-width="1"/><path d="M475.400 124.400h6M478 121.800l-2.600 2.600 2.600 2.600" stroke="#3c76b8" stroke-width="1.400"/>
<path d="M498.600 118.400h15M498.600 130.400h15M507.400 120.900h6.200M507.400 123.200h6.200M507.400 125.600h6.200M507.400 127.900h6.200" stroke="#6a6a6a" stroke-width="1"/><path d="M499 124.400h6M502.600 121.800l2.600 2.600-2.600 2.600" stroke="#3c76b8" stroke-width="1.400"/>
<rect x="529.5" y="116.9" width="15.2" height="14.8" stroke="#777" stroke-width="1"/><path d="M529.5 120.6h15.2M529.5 128h15.2M537.100 116.900v3.700M537.100 128v3.700" stroke="#777" stroke-width=".9"/><path d="M531.6 124.3h11M533.4 122.5l-1.8 1.8 1.8 1.8M540.8 122.5l1.8 1.8-1.8 1.8" stroke="#3c76b8" stroke-width="1"/>
<path d="M557.5 123.2l2.5 2.5 2.5 -2.5" stroke="#505050" stroke-width="1.3"/>
<path d="M665 84.2h5l-2.5 2.8z" fill="#555"/>
<rect x="592.2" y="101.3" width="14.8" height="8.8" fill="#3c76b8"/><ellipse cx="599" cy="105.6" rx="4.300" ry="2.500" fill="#fff"/><circle cx="599.400" cy="105.400" r="1.300" fill="#3c76b8"/>
<g fill="#f3d49a" stroke="#f8ecd2" stroke-width=".5"><rect x="601.2" y="106.400" width="5.600" height="2.300" rx="1"/><rect x="601.800" y="108.700" width="5.600" height="2.300" rx="1"/><rect x="601.400" y="111" width="5.600" height="2.300" rx="1"/><rect x="596.600" y="111.400" width="5.400" height="2.300" rx="1"/><rect x="597" y="113.700" width="5.400" height="2.300" rx="1"/></g>
<path d="M615.3 107.3l2.5 2.5 2.5 -2.5" stroke="#505050" stroke-width="1.3"/>
<path d="M594 128.2h5M596.2 126l-2.2 2.2 2.2 2.2" stroke="#3c76b8" stroke-width="1.2"/>
<path d="M617 135.2h5M619.8 133l2.2 2.2-2.2 2.2" stroke="#3c76b8" stroke-width="1.2"/>
<rect x="694.2" y="78.4" width="12.6" height="11" stroke="#777" stroke-width=".9" fill="#fff"/><path d="M694.2 82.0h12.6M694.2 85.60000000000001h12.6M698.4000000000001 78.4v11M702.6 78.4v11" stroke="#777" stroke-width=".8"/>
<rect x="694.7" y="78.9" width="3.6" height="3" fill="#d24726"/><rect x="698.6" y="82.4" width="3.8" height="3" fill="#3c76b8"/><rect x="694.7" y="85.9" width="3.6" height="3" fill="#3c76b8"/><rect x="701.4000000000001" y="86.0" width="7" height="6.4" fill="#fff" stroke="#555" stroke-width=".9"/><path d="M703.2 89.80000000000001h3.4M703.2 88.4h3.4" stroke="#555" stroke-width=".7"/>
<path d="M786.9 84.5l2.5 2.5 2.5 -2.5" stroke="#505050" stroke-width="1.3"/>
<rect x="694.2" y="103" width="12.6" height="11" stroke="#777" stroke-width=".9" fill="#fff"/><path d="M694.2 106.6h12.6M694.2 110.2h12.6M698.4000000000001 103v11M702.6 103v11" stroke="#777" stroke-width=".8"/>
<rect x="694.6" y="103.4" width="11.800" height="2.800" fill="#c9c9c9"/><path d="M698.8000000000001 117.2c.6-2.400 1.800-3.600 3.800-3.600l1.600 1.600c0 2-2 3-5.400 2z" fill="#3c76b8"/><path d="M703.2 113.2l5-6 1.600 1.600-5.800 5.200z" fill="#555"/>
<path d="M828.1 108.2l2.5 2.5 2.5 -2.5" stroke="#505050" stroke-width="1.3"/>
<rect x="694.2" y="124.4" width="12.6" height="11" stroke="#777" stroke-width=".9" fill="#fff"/><path d="M694.2 128.0h12.6M694.2 131.6h12.6M698.4000000000001 124.4v11M702.6 124.4v11" stroke="#777" stroke-width=".8"/>
<rect x="698.6" y="128.3" width="7.8" height="6.8" fill="#b7cde4"/>
<rect x="694.6" y="124.80000000000001" width="11.800" height="2.800" fill="#c9c9c9"/><path d="M698.8000000000001 138.6c.6-2.400 1.800-3.600 3.800-3.600l1.600 1.600c0 2-2 3-5.400 2z" fill="#3c76b8"/><path d="M703.2 134.6l5-6 1.600 1.600-5.800 5.200z" fill="#555"/>
<path d="M781.9 131.8l2.5 2.5 2.5 -2.5" stroke="#505050" stroke-width="1.3"/>
<rect x="863.4" y="78.6" width="8" height="3.4" stroke="#777" stroke-width=".9"/><rect x="869.8" y="83.19999999999999" width="7.6" height="3.4" stroke="#777" stroke-width=".9"/><rect x="863.4" y="88.0" width="8" height="4.6" stroke="#777" stroke-width=".9"/><path d="M867.4 88.0v4.6M863.4 90.3h8" stroke="#777" stroke-width=".7"/><path d="M863.6 84.89999999999999h5.6M865.6 82.89999999999999l-2 2 2 2" stroke="#3c76b8" stroke-width="1.1"/>
<path d="M922.5 84.5l2.5 2.5 2.5 -2.5" stroke="#505050" stroke-width="1.3"/>
<rect x="863.4" y="102.6" width="8" height="3.4" stroke="#777" stroke-width=".9"/><rect x="863.4" y="107.39999999999999" width="5" height="3.4" stroke="#777" stroke-width=".9"/><rect x="863.4" y="112.19999999999999" width="8" height="4.4" stroke="#777" stroke-width=".9"/><path d="M867.4 112.19999999999999v4.4" stroke="#777" stroke-width=".7"/><path d="M871 104.6l6.4 6.4M877.4 104.6l-6.4 6.4" stroke="#e8401c" stroke-width="1.5"/>
<path d="M922.5 107.7l2.5 2.5 2.5 -2.5" stroke="#505050" stroke-width="1.3"/>
<path d="M863.4 125.60000000000001h14" stroke="#3c76b8" stroke-width="1" stroke-dasharray="2 1"/><rect x="863.4" y="128.0" width="14" height="9" stroke="#777" stroke-width=".9"/><path d="M863.4 130.2h14M863.4 134.8h14M866.8 128.0v9M874 128.0v9" stroke="#777" stroke-width=".7"/><rect x="868" y="130.8" width="4.8" height="3.4" fill="#3c76b8"/><path d="M864 138.6h5M871 138.6h5" stroke="#777" stroke-width="1.4" stroke-linecap="round"/>
<path d="M910.9 131.8l2.5 2.5 2.5 -2.5" stroke="#505050" stroke-width="1.3"/>
<path d="M970.6 81.4v-2.2H959.6l5.6 6-5.6 6h11v-2.2" stroke="#444" stroke-width="1.5" stroke-linejoin="miter"/>
<path d="M985.2 84.5l2.5 2.5 2.5 -2.5" stroke="#505050" stroke-width="1.3"/>
<rect x="958.2" y="101.6" width="13" height="14" stroke="#666" stroke-width="1" fill="#fff"/><path d="M958.2 103.4h13" stroke="#666" stroke-width="1.4"/><path d="M964.7 105.4v7.4M961.6 109.8l3.1 3.1 3.1-3.1" stroke="#3c76b8" stroke-width="1.9"/>
<path d="M977.8 107.3l2.5 2.5 2.5 -2.5" stroke="#505050" stroke-width="1.3"/>
<g transform="translate(965.2 131.800) rotate(-40)"><rect x="-6.800" y="-3.200" width="13.600" height="6.400" rx="1.200" fill="#e98a9a"/><path d="M-6.800 -2a1.200 1.200 0 0 1 1.200-1.200h2.400v6.400h-2.400a1.200 1.200 0 0 1-1.200-1.200z" fill="#dc6a82"/></g>
<path d="M977.8 131.6l2.5 2.5 2.5 -2.5" stroke="#505050" stroke-width="1.3"/>
<path d="M1010.4 81.2h7.4l-2.8 3.4v3.4l-1.8-1.2v-2.2z" fill="#555"/>
<path d="M1024.5 84.5l2.5 2.5 2.5 -2.5" stroke="#505050" stroke-width="1.3"/>
<circle cx="1013" cy="106.4" r="4.6" stroke="#3c76b8" stroke-width="1.5"/><path d="M1009.6 109.8l-4.8 5" stroke="#3c76b8" stroke-width="1.9"/>
<path d="M1024.5 107.3l2.5 2.5 2.5 -2.5" stroke="#505050" stroke-width="1.3"/>
<circle cx="1072.6" cy="92.2" r="5.2" fill="#ff9a1a"/><circle cx="1072.6" cy="92.2" r="6.4" fill="#ff9a1a" opacity=".25"/>
<path d="M1150 104.3h-7.400a2.200 2.200 0 0 1-2.200-2.200V83.600a2.200 2.200 0 0 1 2.200-2.200h10.800l5.600 5.400v8.400" stroke="#4f7bd6" stroke-width="1.300" stroke-linejoin="round"/>
<path d="M1144.200 97.200c2.600-1.800 6.600-3 11.200-2.600M1146.400 96.800c1.800-2.600 3-6 3-8.800 0-1.700 1.300-1.700 1.300 0 0 2.800 2.200 6 5.200 7" stroke="#4f7bd6" stroke-width="1"/>
<g stroke="#4f7bd6" stroke-width="1.500" fill="#f3f3f3"><rect x="-4.700" y="-2.900" width="9.400" height="5.800" rx="2.900" transform="translate(1155 103.400) rotate(-42)"/><rect x="-4.700" y="-2.900" width="9.400" height="5.800" rx="2.900" transform="translate(1160.800 98.200) rotate(-42)" fill="none"/></g>
<path d="M116 188.5h6l-3 3.2z" fill="#666"/>
<rect x="142.8" y="184.2" width="1.6" height="1.6" fill="#999"/>
<rect x="142.8" y="188.2" width="1.6" height="1.6" fill="#999"/>
<rect x="142.8" y="192.2" width="1.6" height="1.6" fill="#999"/>
<path d="M171.5 184.5l9 9M180.5 184.5l-9 9" stroke="#b5b5b5" stroke-width="1.4"/>
<path d="M207.5 189.5l3.5 4 7-8.5" stroke="#b5b5b5" stroke-width="1.6"/>
<path d="M1232 186.5l4 4 4-4" stroke="#555" stroke-width="1.6"/>
<path d="M56 216.8V252H20.3z" fill="#b2b2b2"/>
<path d="M611.7 340.7h9l-9 9z" fill="#1e6b35"/>
<path d="M611.7 383.3h9l-9 9z" fill="#1e6b35"/>
<path d="M611.7 425.8h9l-9 9z" fill="#1e6b35"/>
<rect x="242.4" y="341.5" width="490.4" height="124.4" stroke="#fff" stroke-opacity=".55" stroke-width="1"/>
<rect x="240.8" y="339.9" width="493.6" height="127.6" stroke="#1f6a40" stroke-width="1.5"/>
<rect x="731.2" y="464.4" width="6" height="6" fill="#fff"/>
<rect x="732.1" y="465.3" width="4.2" height="4.2" fill="#217346"/>
<rect x="737.7" y="470.7" width="21" height="21.6" fill="#fff" stroke="#6f9a84" stroke-width="1"/>
<path d="M741.6 475.4v12h13.2v-12" stroke="#7a7a7a" stroke-width="1" fill="none"/><path d="M743.6 475.2h11.7" stroke="#6a6a6a" stroke-width="1.8"/>
<path d="M745.6 478.6h4.8" stroke="#dd5a44" stroke-width="1.7"/><path d="M745.2 482h7.6" stroke="#3b6fb5" stroke-width="1.7"/><path d="M745.2 485h5.6" stroke="#3f8f9b" stroke-width="1.5"/>
<path d="M743.6 473.4l-3.4 5.8h2l-1.8 4.4 4.6-6.200h-2.200l2.400-4z" fill="#f3c680" stroke="#fff" stroke-width=".5"/>
<path d="M1235.6 224.6h7l-3.5-4z" fill="#444"/>
<path d="M35.5 641l-4 4 4 4z" fill="#c3c3c3"/><path d="M55.5 641l4 4-4 4z" fill="#c3c3c3"/>
<circle cx="416.5" cy="645.7" r="7.6" stroke="#6a6a6a" stroke-width="1"/><path d="M412.5 645.7h8M416.5 641.7v8" stroke="#6a6a6a" stroke-width="1"/>
<rect x="89" y="664.6" width="10" height="9.400" rx=".8" stroke="#555" stroke-width="1"/><path d="M92.500 664.600h6.500v2.600h-6.500z" fill="#555"/><circle cx="90.200" cy="664.400" r="2.100" fill="#555" stroke="#f3f3f3" stroke-width=".6"/><path d="M91 669.800h1.400M93.500 669.800h1.400M96 669.800h1.400M91 671.900h1.400M93.500 671.900h1.400M96 671.900h1.400" stroke="#555" stroke-width=".9"/>
<path d="M126.5 662.8a5.6 5.6 0 1 0 3.2 9.8" stroke="#555" stroke-width="1"/><circle cx="126" cy="664.2" r="0.9" fill="#555"/><path d="M122.5 666.5h6.5M126 666.5v3l-2 3.4M126 669.5l1.5 2" stroke="#555" stroke-width=".9"/><path d="M128.6 670.2l4.6 4.6M133.2 670.2l-4.6 4.6" stroke="#333" stroke-width="1.5"/>
<rect x="847" y="663" width="12.5" height="8.6" fill="#505050"/><path d="M850 674h5" stroke="#505050" stroke-width="1.4"/><circle cx="858.2" cy="672.2" r="3.6" fill="#f3f3f3"/><circle cx="858.2" cy="672.2" r="2.1" stroke="#444" stroke-width="1.5" stroke-dasharray="1.3 0.9"/>
<rect x="945" y="663.5" width="13" height="11" stroke="#666" stroke-width="1"/><path d="M945 667.2h13M945 670.8h13M949.3 663.5v11M953.7 663.5v11" stroke="#666" stroke-width=".9"/>
<rect x="985" y="663" width="13" height="12.5" stroke="#666" stroke-width="1"/><rect x="988" y="666" width="7" height="6.5" stroke="#666" stroke-width=".9"/><path d="M989.5 668h4M989.5 670.3h4" stroke="#666" stroke-width=".7"/>
<rect x="1024.5" y="663" width="13" height="12.5" stroke="#666" stroke-width="1"/><path d="M1029 663v6.3h4.4V663M1024.5 669.3h13" stroke="#666" stroke-width=".9"/>
<path d="M1057 669h6.6" stroke="#555" stroke-width="1.1"/><path d="M1070.2 669h99.4" stroke="#777" stroke-width="1"/><path d="M1120 666v6" stroke="#777" stroke-width="1"/><rect x="1130.2" y="663.3" width="4.2" height="11.2" fill="#444"/><path d="M1174.5 669h7M1178 665.5v7" stroke="#555" stroke-width="1.1"/></svg>
<svg class="abs" style="left:0;top:0" width="1256" height="687" viewBox="0 0 1256 687"><path d="M710.2 460.6L756.6 549" stroke="#e60012" stroke-width="2.6" fill="none"/><circle cx="710.2" cy="460.4" r="3.9" fill="#e60012"/></svg>
<div class="abs" style="left:673.2px;top:547.8px;width:571.2px;height:110.2px;background:#fff;border:3.2px solid #e60012;box-shadow:0 0 0 1px rgba(255,255,255,.85)"></div>
<span id="c111" class="t" style="left:685.6px;top:560.9px;height:33px;font-size:33px;font-weight:bold;color:#e60012;letter-spacing:1.9px;-webkit-text-stroke:1.6px #e60012;transform:scaleX(1.0000)">この<span style="-webkit-text-stroke-width:1.05px">状</span><span style="-webkit-text-stroke-width:.55px">態</span>で</span>
<span id="c112" class="t" style="left:852.0px;top:560.9px;height:33px;font-size:33px;font-weight:bold;color:#e60012;letter-spacing:0px;-webkit-text-stroke:1.6px #e60012;transform:scaleX(1.0000)">「</span>
<span id="c113" class="t" style="left:886.4px;top:559.5px;height:36px;font-size:36px;font-weight:bold;color:#e60012;letter-spacing:0px;-webkit-text-stroke:0.4px #e60012;transform:scaleX(1.1877)">Shift</span>
<span id="c114" class="t" style="left:992.6px;top:559.5px;height:36px;font-size:36px;font-weight:bold;color:#e60012;letter-spacing:0px;-webkit-text-stroke:0.4px #e60012;transform:scaleX(1.4502)">+</span>
<span id="c115" class="t" style="left:1034.6px;top:559.5px;height:36px;font-size:36px;font-weight:bold;color:#e60012;letter-spacing:0px;-webkit-text-stroke:0.4px #e60012;transform:scaleX(1.1875)">Alt</span>
<span id="c116" class="t" style="left:1102.3px;top:559.5px;height:36px;font-size:36px;font-weight:bold;color:#e60012;letter-spacing:0px;-webkit-text-stroke:0.4px #e60012;transform:scaleX(1.4502)">+</span>
<span id="c117" class="t" style="left:1144.6px;top:559.5px;height:36px;font-size:36px;font-weight:bold;color:#e60012;letter-spacing:0px;-webkit-text-stroke:0.4px #e60012;transform:scaleX(1.4740)">=</span>
<span id="c118" class="t" style="left:1175.0px;top:560.9px;height:33px;font-size:33px;font-weight:bold;color:#e60012;letter-spacing:0px;-webkit-text-stroke:1.6px #e60012;transform:scaleX(1.0000)">」</span>
<span id="c119" class="t" style="left:1198.5px;top:560.9px;height:33px;font-size:33px;font-weight:bold;color:#e60012;letter-spacing:0px;-webkit-text-stroke:1.6px #e60012;transform:scaleX(1.0000)">を</span>
<span id="c120" class="t" style="left:685.6px;top:606.3px;height:33px;font-size:33px;font-weight:bold;color:#e60012;letter-spacing:3.3px;-webkit-text-stroke:1.6px #e60012;transform:scaleX(1.0000)"><span style="-webkit-text-stroke-width:1.05px">押</span>せば<span style="-webkit-text-stroke-width:1.05px">合計</span>が<span style="-webkit-text-stroke-width:1.05px">出</span>る</span>
</div>
<div id="frame"></div>
</body>
</html>
